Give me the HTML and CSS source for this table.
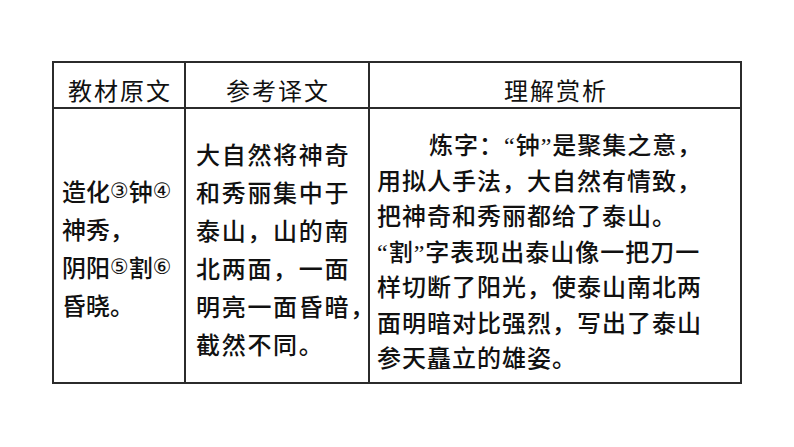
FILE: index.html
```html
<!DOCTYPE html>
<html lang="zh-CN">
<head>
<meta charset="utf-8">
<title>泰山 理解赏析</title>
<link rel="stylesheet" href="styles.css">
</head>
<body>
<div class="table" role="table">
  <div class="cell head h1" role="columnheader">教材原文</div>
  <div class="cell head h2" role="columnheader">参考译文</div>
  <div class="cell head h3" role="columnheader">理解赏析</div>
  <div class="cell body c1" role="cell">
    <div class="text">造化<span class="num">③</span>钟<span class="num">④</span><br>神秀，<br>阴阳<span class="num">⑤</span>割<span class="num">⑥</span><br>昏晓。</div>
  </div>
  <div class="cell body c2" role="cell">
    <div class="text">大自然将神奇<br>和秀丽集中于<br>泰山，山的南<br>北两面，一面<br>明亮一面昏暗，<br>截然不同。</div>
  </div>
  <div class="cell body c3" role="cell">
    <p class="text"><span class="indent"></span>炼字：“钟”是聚集之意，<br>用拟人手法，大自然有情致，<br>把神奇和秀丽都给了泰山。<br>“割”字表现出泰山像一把刀一<br>样切断了阳光，使泰山南北两<br>面明暗对比强烈，写出了泰山<br>参天矗立的雄姿。</p>
  </div>
</div>
</body>
</html>
```

FILE: styles.css
```css
html, body {
  margin: 0;
  padding: 0;
  background: #ffffff;
}

body {
  font-family: "Noto Sans CJK SC", sans-serif;
  color: #111111;
}

.table {
  display: grid;
  grid-template-columns: 132px 184px 372px;
  grid-template-rows: 46px 275px;
  width: max-content;
  margin: 61px 0 0 52px;
  border-top: 2px solid #2b2b2b;
  border-left: 2px solid #2b2b2b;
}

.cell {
  border-right: 2px solid #2b2b2b;
  border-bottom: 2px solid #2b2b2b;
  box-sizing: border-box;
  overflow: visible;
}

.head {
  display: flex;
  align-items: center;
  justify-content: center;
  padding-top: 9px;
  font-size: 24px;
  line-height: 1;
  letter-spacing: 2px;
  text-indent: 2px;
}

.body {
  display: flex;
  align-items: center;
  font-size: 24px;
  font-weight: 500;
  white-space: nowrap;
}

.c1 {
  padding: 5px 0 0 8px;
  line-height: 38px;
}

.num {
  font-family: "DejaVu Sans", sans-serif;
  font-weight: 400;
  font-size: 21px;
  vertical-align: 3px;
  line-height: 1;
}

.c2 {
  padding: 6px 0 0 10px;
  line-height: 38px;
  letter-spacing: 1.7px;
}

.c3 {
  align-items: flex-start;
  padding: 20px 0 0 7px;
  font-family: "Liberation Serif", "Noto Sans CJK SC", serif;
  line-height: 35.5px;
  letter-spacing: 1px;
}

.c3 .text {
  margin: 0;
}

.indent {
  display: inline-block;
  width: 52px;
}
```
